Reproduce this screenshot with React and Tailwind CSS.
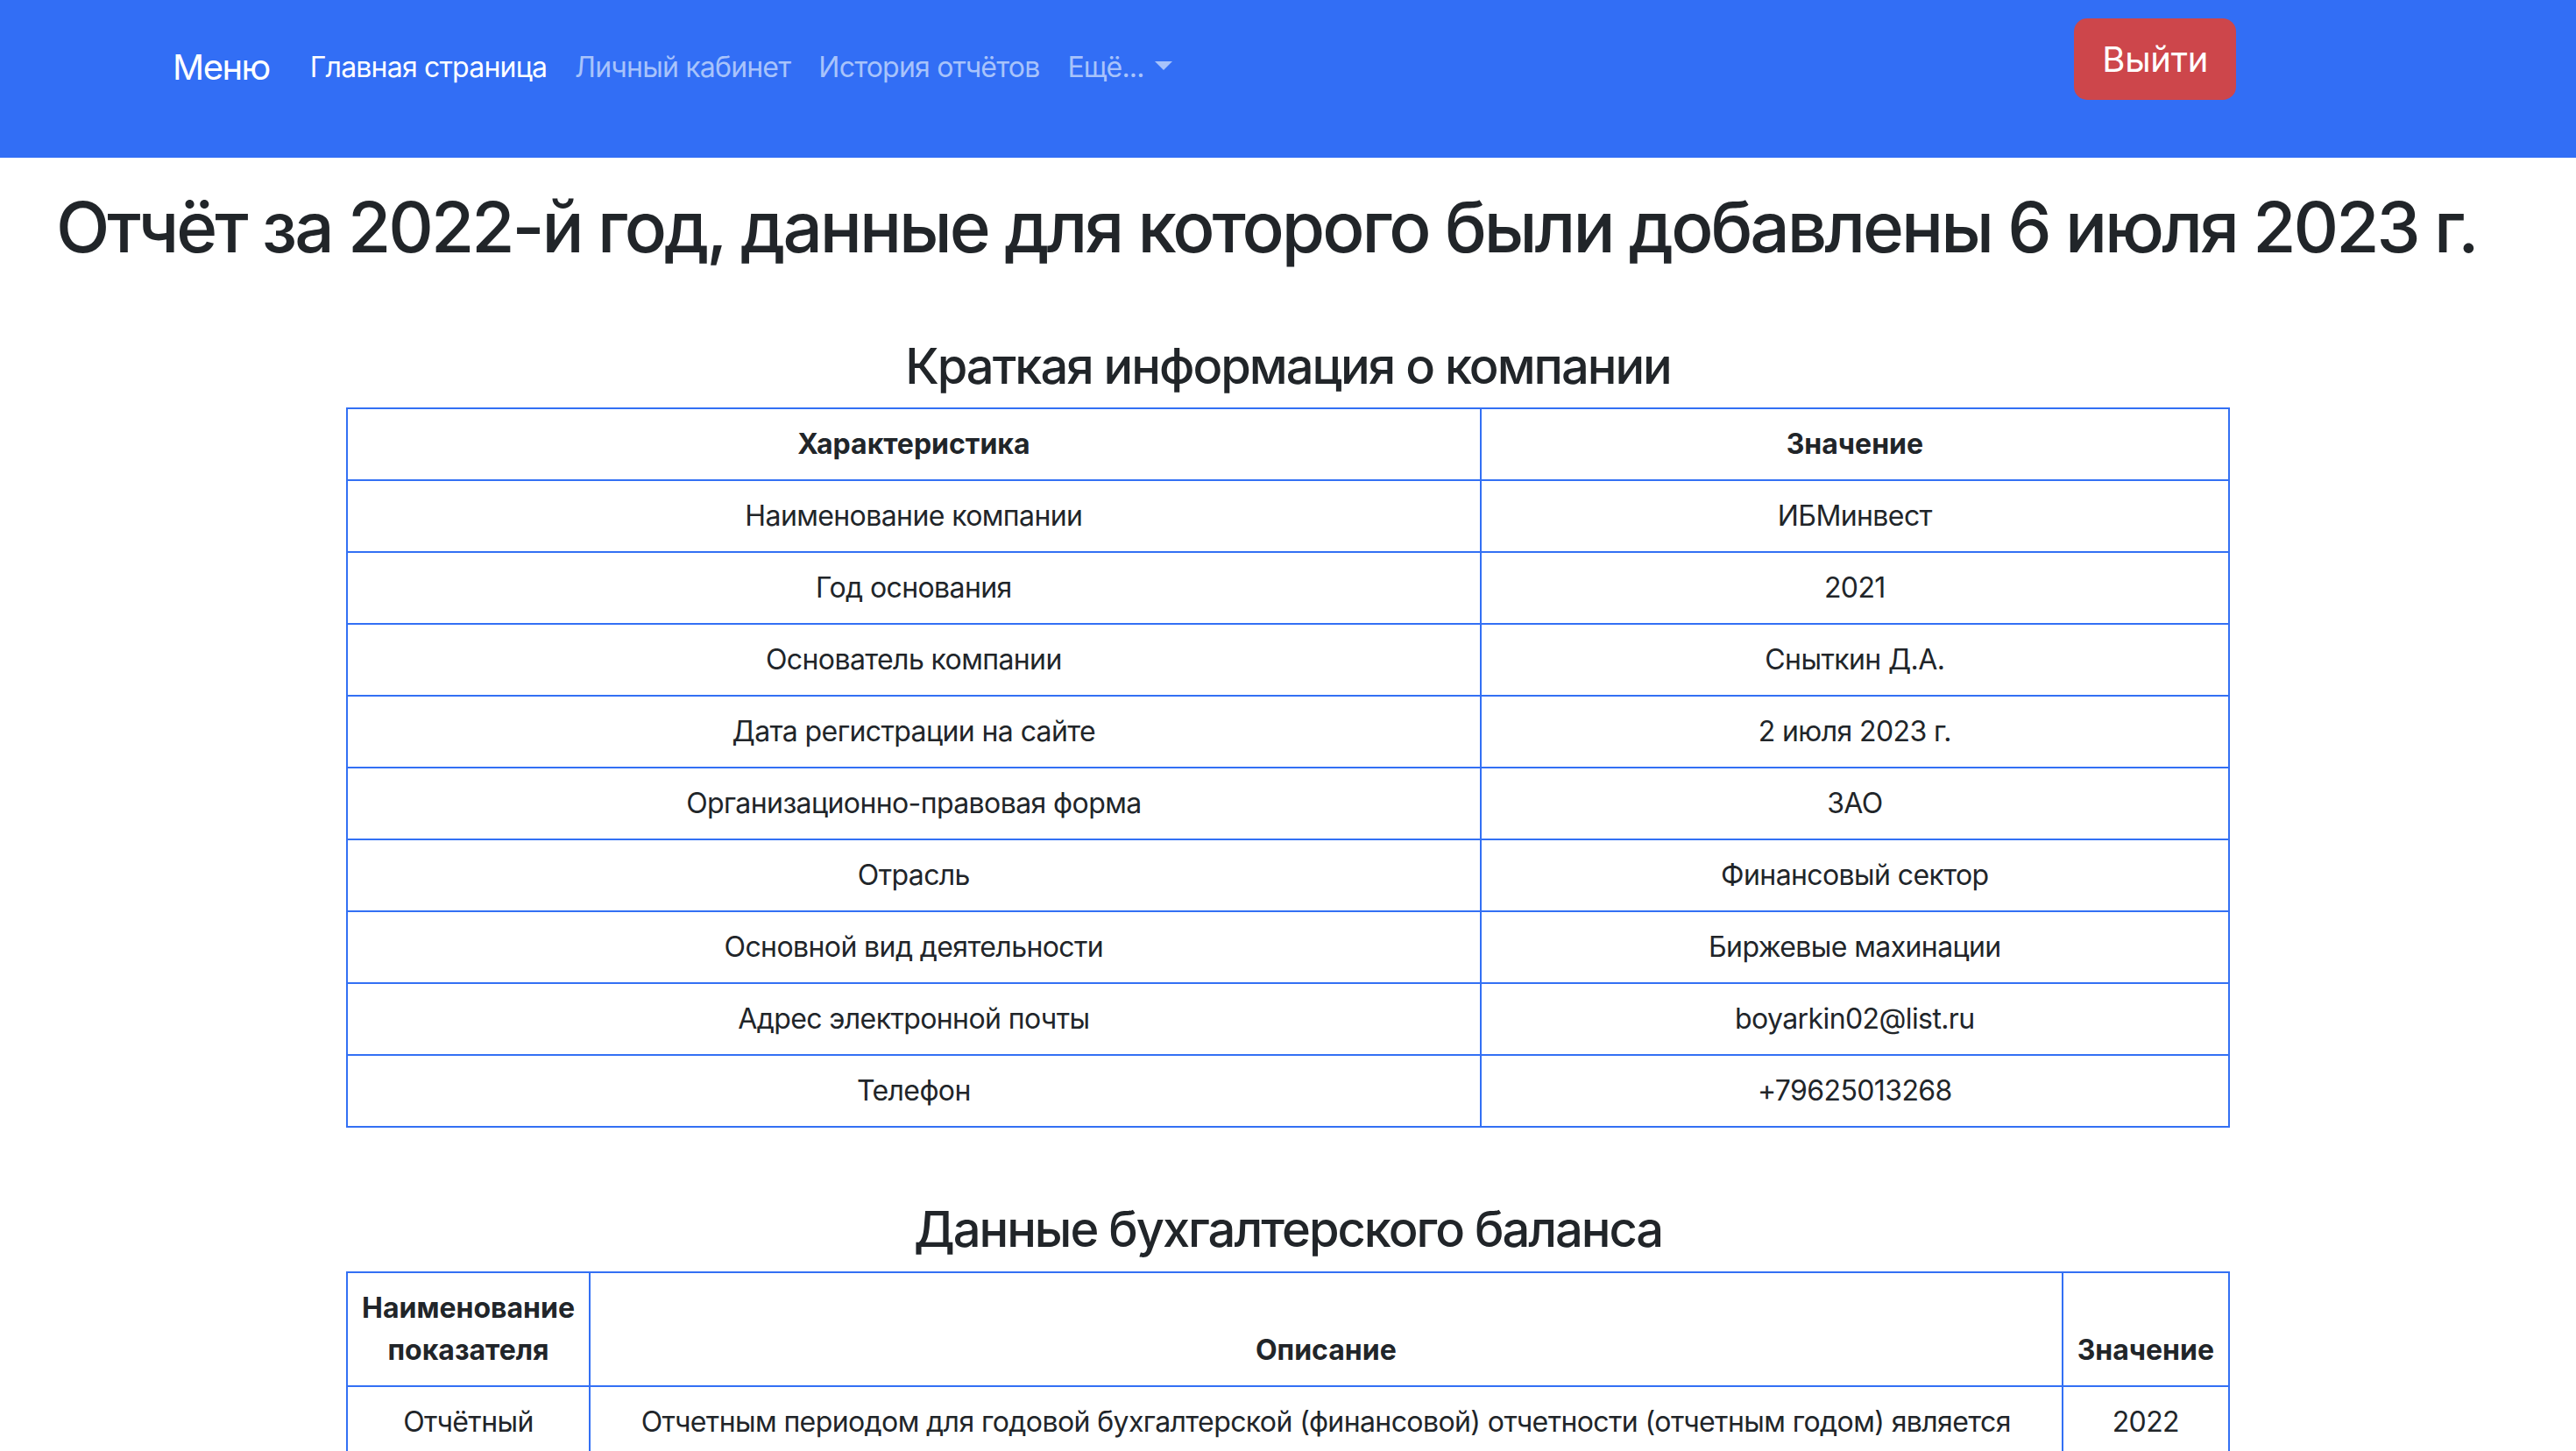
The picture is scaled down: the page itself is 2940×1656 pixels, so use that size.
import React from "react";

const info = [
  ["Наименование компании", "ИБМинвест"],
  ["Год основания", "2021"],
  ["Основатель компании", "Сныткин Д.А."],
  ["Дата регистрации на сайте", "2 июля 2023 г."],
  ["Организационно-правовая форма", "ЗАО"],
  ["Отрасль", "Финансовый сектор"],
  ["Основной вид деятельности", "Биржевые махинации"],
  ["Адрес электронной почты", "boyarkin02@list.ru"],
  ["Телефон", "+79625013268"],
];

export default function App() {
  return (
    <div className="w-[2940px] h-[1656px] overflow-hidden bg-white text-[#212529] font-['Inter','Noto_Sans',sans-serif]">
      <nav className="h-[180px] bg-[#326ef5] flex items-start justify-between pl-[197px] pr-[388px]">
        <div className="flex items-center mt-[47px] h-[60px]">
          <span className="text-[40px] leading-[60px] text-white mr-[30px] tracking-[-1.5px]">Меню</span>
          <a className="px-[16px] text-[32px] leading-[48px] text-white tracking-[-0.8px]">Главная страница</a>
          <a className="px-[16px] text-[32px] leading-[48px] text-[#a8c3fb] tracking-[-0.8px]">Личный кабинет</a>
          <a className="px-[16px] text-[32px] leading-[48px] text-[#a8c3fb] tracking-[-0.8px]">История отчётов</a>
          <a className="px-[16px] text-[32px] leading-[48px] text-[#a8c3fb] tracking-[-0.8px] flex items-center">
            Ещё...
            <span className="ml-[12px] mb-[4px] inline-block w-0 h-0 border-l-[10px] border-r-[10px] border-t-[10px] border-l-transparent border-r-transparent border-t-[#a8c3fb]"></span>
          </a>
        </div>
        <button className="mt-[21px] h-[93px] px-[32px] rounded-[15px] bg-[#cd464b] text-white text-[40px] leading-[60px] tracking-[-0.3px]">
          Выйти
        </button>
      </nav>

      <h1 className="mt-[31px] pl-[64px] text-[80px] leading-[96px] font-medium whitespace-nowrap tracking-[-3px]">
        Отчёт за 2022-й год, данные для которого были добавлены 6 июля 2023 г.
      </h1>

      <h3 className="mt-[78px] mb-[13px] text-center text-[56px] leading-[67px] font-medium tracking-[-2px]">
        Краткая информация о компании
      </h3>
      <table className="mx-auto w-[2150px] border-collapse text-[32px] leading-[48px] text-center">
        <colgroup>
          <col className="w-[1295px]" />
          <col className="w-[855px]" />
        </colgroup>
        <thead>
          <tr>
            <th className="border-2 border-[#3370f4] py-[16px] px-[16px] font-bold">Характеристика</th>
            <th className="border-2 border-[#3370f4] py-[16px] px-[16px] font-bold">Значение</th>
          </tr>
        </thead>
        <tbody>
          {info.map(([a, b]) => (
            <tr key={a}>
              <td className="border-2 border-[#3370f4] py-[16px] px-[16px] tracking-[-0.6px]">{a}</td>
              <td className="border-2 border-[#3370f4] py-[16px] px-[16px] tracking-[-0.6px]">{b}</td>
            </tr>
          ))}
        </tbody>
      </table>

      <h3 className="mt-[83px] mb-[14px] text-center text-[56px] leading-[67px] font-medium tracking-[-2px]">
        Данные бухгалтерского баланса
      </h3>
      <table className="mx-auto w-[2150px] border-collapse text-[32px] leading-[48px] text-center">
        <colgroup>
          <col className="w-[277px]" />
          <col className="w-[1684px]" />
          <col className="w-[189px]" />
        </colgroup>
        <thead>
          <tr>
            <th className="border-2 border-[#3370f4] py-[16px] px-[16px] font-bold align-bottom">Наименование показателя</th>
            <th className="border-2 border-[#3370f4] py-[16px] px-[16px] font-bold align-bottom">Описание</th>
            <th className="border-2 border-[#3370f4] py-[16px] px-[16px] font-bold align-bottom">Значение</th>
          </tr>
        </thead>
        <tbody>
          <tr>
            <td className="border-2 border-[#3370f4] py-[16px] px-[16px] align-top tracking-[-0.6px]">Отчётный период</td>
            <td className="border-2 border-[#3370f4] py-[16px] px-[16px] align-top tracking-[-0.6px]">
              Отчетным периодом для годовой бухгалтерской (финансовой) отчетности (отчетным годом) является календарный год — с 1 января по 31 декабря включительно
            </td>
            <td className="border-2 border-[#3370f4] py-[16px] px-[16px] align-top tracking-[-0.6px]">2022</td>
          </tr>
        </tbody>
      </table>
    </div>
  );
}
